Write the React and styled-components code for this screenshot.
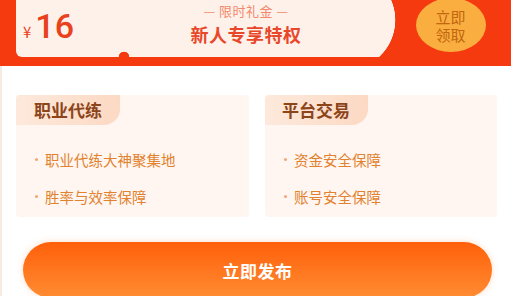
import React from 'react';
import styled, { createGlobalStyle } from 'styled-components';

const GlobalStyle = createGlobalStyle`
  html, body {
    margin: 0;
    padding: 0;
    background: #ffffff;
    font-family: "Noto Sans CJK SC", "Noto Sans", sans-serif;
  }
`;

const Page = styled.div`
  width: 511px;
  height: 296px;
  overflow: hidden;
  background: #ffffff;
  box-shadow: inset 2px 0 0 #f6ebe0;
`;

const Banner = styled.div`
  display: flex;
  height: 66px;
  padding-left: 16px;
  background: #f43a0e;
`;

const CREAM = '#fdf1ea';
const RED = '#f43a0e';

const Coupon = styled.div`
  display: flex;
  align-items: stretch;
  width: 380px;
  height: 57px;
  border-bottom-left-radius: 6px;
  background:
    radial-gradient(circle at 108px 57px, ${RED} 5px, transparent 5.6px),
    radial-gradient(circle at 329px 20px, ${CREAM} 50px, transparent 50.6px),
    linear-gradient(${CREAM}, ${CREAM}) no-repeat 0 0 / 329px 100%;
`;

const Amount = styled.div`
  display: flex;
  align-items: baseline;
  width: 73px;
  padding-left: 7px;
  padding-top: 4px;
  color: #e8411c;
`;

const Yen = styled.span`
  font-size: 15px;
  margin-right: 4px;
`;

const Value = styled.span`
  font-family: Roboto, "Noto Sans", sans-serif;
  font-size: 34px;
  font-weight: 500;
  line-height: 44px;
`;

const Title = styled.div`
  flex: 1;
  display: flex;
  flex-direction: column;
  align-items: center;
  padding-top: 1px;
`;

const Tag = styled.div`
  font-size: 13px;
  line-height: 20px;
  color: #f2886c;
  letter-spacing: 0.5px;
`;

const Headline = styled.div`
  font-size: 18px;
  line-height: 26px;
  font-weight: 700;
  color: #e8472a;
  letter-spacing: 0.5px;
`;

const ClaimArea = styled.div`
  flex: 1;
  display: flex;
  justify-content: center;
  padding-right: 6px;
`;

const Claim = styled.button`
  display: flex;
  flex-direction: column;
  align-items: center;
  justify-content: center;
  width: 70px;
  height: 54px;
  margin-top: -2px;
  border: none;
  border-radius: 50%;
  background: #f9ae3f;
  color: #c2660f;
  font-family: inherit;
  font-size: 15px;
  line-height: 18px;
  padding: 2px 0 0;
  cursor: pointer;
`;

const ClaimLine = styled.span`
  display: block;
`;

const Cards = styled.div`
  display: grid;
  grid-template-columns: 233px 232px;
  gap: 16px;
  padding: 29px 0 0 16px;
`;

const Card = styled.div`
  height: 122px;
  border-radius: 4px;
  background: #fff6f1;
  overflow: hidden;
`;

const CardTab = styled.div`
  display: inline-block;
  height: 30px;
  padding: 0 18px 0 ${p => p.$indent}px;
  width: ${p => p.$width}px;
  box-sizing: border-box;
  border-bottom-right-radius: 16px;
  background: linear-gradient(90deg, #fde9dc, #fcd9c3);
  color: #8c4419;
  font-size: 17px;
  font-weight: 700;
  line-height: 30px;
`;

const List = styled.ul`
  list-style: none;
  margin: 0;
  padding: 16px 0 0 ${p => p.$indent}px;
`;

const Item = styled.li`
  display: flex;
  align-items: center;
  height: 37px;
  color: #e2822f;
  font-size: 14.5px;

  &::before {
    content: '';
    width: 3px;
    height: 3px;
    border-radius: 50%;
    background: #f0a878;
    margin-right: 7px;
  }
`;

const Footer = styled.div`
  padding: 25px 20px 0 23px;
`;

const Publish = styled.button`
  width: 469px;
  height: 56px;
  border: none;
  border-radius: 28px;
  background: linear-gradient(to bottom, #ff600a, #ff8c32);
  box-shadow: 0 0 6px rgba(255, 140, 60, 0.3);
  color: #ffffff;
  font-family: inherit;
  font-size: 17px;
  font-weight: 700;
  letter-spacing: 0.5px;
  cursor: pointer;
`;

const cards = [
  { title: '职业代练', width: 104, indent: 18, items: ['职业代练大神聚集地', '胜率与效率保障'] },
  { title: '平台交易', width: 103, indent: 17, items: ['资金安全保障', '账号安全保障'] },
];

export default function App() {
  return (
    <Page>
      <GlobalStyle />
      <Banner>
        <Coupon>
          <Amount>
            <Yen>¥</Yen>
            <Value>16</Value>
          </Amount>
          <Title>
            <Tag>— 限时礼金 —</Tag>
            <Headline>新人专享特权</Headline>
          </Title>
        </Coupon>
        <ClaimArea>
          <Claim>
            <ClaimLine>立即</ClaimLine>
            <ClaimLine>领取</ClaimLine>
          </Claim>
        </ClaimArea>
      </Banner>

      <Cards>
        {cards.map(card => (
          <Card key={card.title}>
            <CardTab $width={card.width} $indent={card.indent}>{card.title}</CardTab>
            <List $indent={19}>
              {card.items.map(text => (
                <Item key={text}>{text}</Item>
              ))}
            </List>
          </Card>
        ))}
      </Cards>

      <Footer>
        <Publish>立即发布</Publish>
      </Footer>
    </Page>
  );
}
